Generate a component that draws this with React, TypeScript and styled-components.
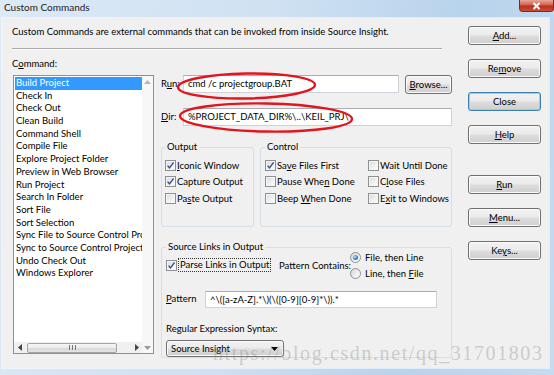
import React from "react";
import styled, { createGlobalStyle } from "styled-components";

const GlobalStyle = createGlobalStyle`
  html, body {
    margin: 0;
    padding: 0;
    background: #aecbe8;
  }
  body {
    font-family: Lato, "Liberation Sans", Arial, sans-serif;
    font-size: 9.5px;
    color: #000;
  }
  * {
    box-sizing: border-box;
  }
`;

const Window = styled.div`
  position: relative;
  width: 554px;
  height: 375px;
  display: flex;
  flex-direction: column;
  overflow: hidden;
  background: linear-gradient(100deg, #dce9f6 0%, #cfe1f2 45%, #b8d3ec 75%, #c4dbf0 100%);
`;

const TitleBar = styled.div`
  height: 18px;
  flex: none;
  display: flex;
  justify-content: space-between;
  align-items: flex-start;
`;

const Title = styled.span`
  padding: 1px 0 0 4px;
  font-size: 10px;
  line-height: 12px;
  color: #1b1b1b;
`;

const CloseButton = styled.div`
  width: 35px;
  height: 12px;
  display: flex;
  align-items: center;
  justify-content: center;
  border: 1px solid #7a2a20;
  border-top: none;
  border-radius: 0 0 4px 4px;
  background: linear-gradient(180deg, #e9a799 0%, #d1604a 45%, #bb2f1b 55%, #c9503a 100%);
`;

const Client = styled.div`
  flex: 1;
  margin: 0 5px 7px 2px;
  padding: 8px 0 0 10px;
  display: flex;
  background: #f0f0f0;
  box-shadow: 0 0 0 1px rgba(255, 255, 255, 0.55);
`;

const MainColumn = styled.div`
  width: 440px;
  display: flex;
  flex-direction: column;
`;

const Description = styled.div`
  height: 12px;
  line-height: 12px;
  white-space: nowrap;
`;

const Separator = styled.div`
  width: 430px;
  margin-top: 10px;
  border-top: 1px solid #a9a9a9;
  border-bottom: 1px solid #fcfcfc;
`;

const Body = styled.div`
  margin-top: 8px;
  display: flex;
  gap: 7px;
`;

const LeftColumn = styled.div`
  width: 142px;
  display: flex;
  flex-direction: column;
`;

const FieldLabel = styled.div`
  height: 12px;
  line-height: 12px;
  margin-bottom: 5px;
`;

const ListBox = styled.div`
  margin-left: 1px;
  width: 141px;
  height: 279px;
  border: 1px solid #8e9095;
  background: #fff;
  display: grid;
  grid-template-columns: 1fr 11px;
  grid-template-rows: 1fr 11px;
`;

const ListItems = styled.div`
  padding: 1px 0 0 1px;
  overflow: hidden;
`;

const ListItem = styled.div<{ $selected?: boolean }>`
  height: 12.7px;
  line-height: 12.7px;
  padding-left: 1px;
  white-space: nowrap;
  overflow: hidden;
  background: ${(p) => (p.$selected ? "#3399ff" : "transparent")};
  color: ${(p) => (p.$selected ? "#fff" : "#000")};
`;

const VScroll = styled.div`
  grid-row: 1 / 3;
  grid-column: 2;
  background: #f7f7f7;
  display: flex;
  flex-direction: column;
  justify-content: space-between;
  align-items: center;
  padding: 4px 0 3px;
`;

const HScroll = styled.div`
  grid-row: 2;
  grid-column: 1;
  background: #f0f0f0;
  display: flex;
  align-items: center;
`;

const ArrowCell = styled.div`
  width: 11px;
  height: 11px;
  flex: none;
  display: flex;
  align-items: center;
  justify-content: center;
`;

const Thumb = styled.div`
  width: 90px;
  height: 10px;
  margin: 0 auto 0 2px;
  border: 1px solid #a4a4a4;
  border-radius: 2px;
  background: linear-gradient(180deg, #f7f7f7 0%, #e9e9e9 50%, #d9d9d9 51%, #e3e3e3 100%);
  display: flex;
  align-items: center;
  justify-content: center;
`;

const RightColumn = styled.div`
  width: 291px;
  padding-top: 17px;
  display: flex;
  flex-direction: column;
`;

const FormRow = styled.div<{ $top?: number; $height: number }>`
  display: flex;
  align-items: flex-start;
  margin-top: ${(p) => p.$top ?? 0}px;
  height: ${(p) => p.$height}px;
`;

const RowLabel = styled.span<{ $width: number; $height: number }>`
  width: ${(p) => p.$width}px;
  flex: none;
  line-height: ${(p) => p.$height}px;
  white-space: nowrap;
`;

const TextInput = styled.div<{ $width?: number; $height: number }>`
  ${(p) => (p.$width ? `width: ${p.$width}px; flex: none;` : "flex: 1;")}
  height: ${(p) => p.$height}px;
  line-height: ${(p) => p.$height - 2}px;
  padding-left: 4px;
  border: 1px solid #cfd2d8;
  border-top-color: #abadb3;
  background: #fff;
  white-space: nowrap;
  overflow: hidden;
`;

const PushButton = styled.div<{ $width?: number; $default?: boolean; $left?: number; $top?: number }>`
  width: ${(p) => p.$width ?? 73}px;
  height: 19px;
  flex: none;
  margin-left: ${(p) => p.$left ?? 0}px;
  margin-top: ${(p) => p.$top ?? 0}px;
  display: flex;
  align-items: center;
  justify-content: center;
  border: 1px solid ${(p) => (p.$default ? "#3c7fb1" : "#707070")};
  border-radius: 3px;
  background: linear-gradient(180deg, #f2f2f2 0%, #ebebeb 48%, #dddddd 52%, #cfcfcf 100%);
  box-shadow: inset 0 0 0 1px ${(p) => (p.$default ? "#8fd2f6" : "#fbfbfb")};
  white-space: nowrap;
`;

const GroupsRow = styled.div`
  margin-top: 15px;
  display: flex;
  gap: 6px;
  height: 86px;
`;

const Group = styled.fieldset<{ $width: number; $pad: number }>`
  width: ${(p) => p.$width}px;
  margin: 0;
  padding: 0 ${(p) => p.$pad}px;
  min-width: 0;
  border: 1px solid #d5dfe5;
  border-radius: 3px;
`;

const Legend = styled.legend`
  padding: 0 2px;
  margin: 0;
  line-height: 12px;
  font-size: 9.5px;
`;

const CheckGrid = styled.div<{ $columns: string }>`
  padding-top: 4px;
  display: grid;
  grid-template-columns: ${(p) => p.$columns};
  grid-auto-rows: 16.5px;
`;

const CheckItem = styled.label`
  display: flex;
  align-items: center;
  gap: 1px;
  white-space: nowrap;
`;

const Box = styled.span`
  width: 11px;
  height: 11px;
  flex: none;
  display: flex;
  align-items: center;
  justify-content: center;
  border: 1px solid #8e8f8f;
  background: linear-gradient(135deg, #d8d8d8 0%, #f2f2f2 60%, #fbfbfb 100%);
  box-shadow: inset 0 0 0 1px #f6f6f6;
`;

const FocusText = styled.span`
  border: 1px dotted #333;
  padding: 0 1px;
  line-height: 12px;
`;

const SourceGroup = styled.fieldset`
  margin: 14px 0 0;
  padding: 0 4px;
  min-width: 0;
  border: 1px solid #d5dfe5;
  border-radius: 3px;
`;

const LinksRow = styled.div`
  margin-top: -4px;
  height: 32px;
  display: grid;
  grid-template-columns: 113px 71px 1fr;
  align-items: center;
  white-space: nowrap;
`;

const RadioList = styled.div`
  display: flex;
  flex-direction: column;
`;

const RadioItem = styled.label`
  height: 16px;
  display: flex;
  align-items: center;
  gap: 4px;
  white-space: nowrap;
`;

const RadioCircle = styled.span<{ $checked?: boolean }>`
  width: 11px;
  height: 11px;
  flex: none;
  border-radius: 50%;
  border: 1px solid #8e8f8f;
  background: linear-gradient(135deg, #d6d6d6 0%, #f4f4f4 70%, #fdfdfd 100%);
  display: flex;
  align-items: center;
  justify-content: center;
  &::after {
    content: "";
    display: ${(p) => (p.$checked ? "block" : "none")};
    width: 5px;
    height: 5px;
    border-radius: 50%;
    background: radial-gradient(circle at 35% 35%, #bfe3ff 0%, #4a90d9 45%, #1c4f94 100%);
  }
`;

const SmallLabel = styled.div<{ $top: number }>`
  margin-top: ${(p) => p.$top}px;
  height: 12px;
  line-height: 12px;
`;

const ComboBox = styled.div`
  margin-top: 5px;
  width: 118px;
  height: 17px;
  padding: 0 5px 0 4px;
  display: flex;
  align-items: center;
  justify-content: space-between;
  border: 1px solid #707070;
  border-radius: 3px;
  background: linear-gradient(180deg, #f2f2f2 0%, #ebebeb 48%, #dddddd 52%, #cfcfcf 100%);
  box-shadow: inset 0 0 0 1px #fbfbfb;
`;

const ButtonColumn = styled.div`
  margin-left: 16px;
  display: flex;
  flex-direction: column;
  gap: 14px;
`;

const Annotations = styled.svg`
  position: absolute;
  left: 0;
  top: 0;
  pointer-events: none;
`;

const Watermark = styled.div`
  position: absolute;
  left: 213px;
  top: 341px;
  font-family: "Liberation Serif", "Times New Roman", serif;
  font-size: 20px;
  line-height: 24px;
  letter-spacing: 1.6px;
  white-space: nowrap;
  color: rgba(150, 150, 150, 0.42);
  pointer-events: none;
`;

const Check = () => (
  <svg width="9" height="9" viewBox="0 0 9 9">
    <path d="M1.6 4.6 L3.5 6.9 L7.6 1.4" fill="none" stroke="#2f4f8f" strokeWidth="1.4" />
  </svg>
);

const CheckBox = ({ checked, children }: { checked?: boolean; children: React.ReactNode }) => (
  <CheckItem>
    <Box>{checked && <Check />}</Box>
    <span>{children}</span>
  </CheckItem>
);

const Tri = ({ dir, color = "#444" }: { dir: "up" | "down" | "left" | "right"; color?: string }) => {
  const pts = {
    up: "0,4 3.5,0 7,4",
    down: "0,0 3.5,4 7,0",
    left: "4,0 0,3.5 4,7",
    right: "0,0 4,3.5 0,7",
  }[dir];
  const horizontal = dir === "left" || dir === "right";
  return (
    <svg width={horizontal ? 4 : 7} height={horizontal ? 7 : 4} viewBox={horizontal ? "0 0 4 7" : "0 0 7 4"}>
      <polygon points={pts} fill={color} />
    </svg>
  );
};

const commands = [
  "Build Project",
  "Check In",
  "Check Out",
  "Clean Build",
  "Command Shell",
  "Compile File",
  "Explore Project Folder",
  "Preview in Web Browser",
  "Run Project",
  "Search In Folder",
  "Sort File",
  "Sort Selection",
  "Sync File to Source Control Project",
  "Sync to Source Control Project",
  "Undo Check Out",
  "Windows Explorer",
];

const App = () => {
  return (
    <Window>
      <GlobalStyle />
      <TitleBar>
        <Title>Custom Commands</Title>
        <CloseButton>
          <svg width="9" height="8" viewBox="0 0 9 8">
            <path d="M1.5 1 L7.5 7 M7.5 1 L1.5 7" stroke="#fff" strokeWidth="2" />
          </svg>
        </CloseButton>
      </TitleBar>
      <Client>
        <MainColumn>
          <Description>
            Custom Commands are external commands that can be invoked from inside Source Insight.
          </Description>
          <Separator />
          <Body>
            <LeftColumn>
              <FieldLabel>
                C<u>o</u>mmand:
              </FieldLabel>
              <ListBox>
                <ListItems>
                  {commands.map((c, i) => (
                    <ListItem key={c} $selected={i === 0}>
                      {c}
                    </ListItem>
                  ))}
                </ListItems>
                <VScroll>
                  <Tri dir="up" color="#b5b5b5" />
                  <Tri dir="down" color="#9a9a9a" />
                </VScroll>
                <HScroll>
                  <ArrowCell>
                    <Tri dir="left" />
                  </ArrowCell>
                  <Thumb>
                    <svg width="7" height="5" viewBox="0 0 7 5">
                      <path d="M0.5 0 V5 M3.5 0 V5 M6.5 0 V5" stroke="#777" strokeWidth="1" />
                    </svg>
                  </Thumb>
                  <ArrowCell>
                    <Tri dir="right" />
                  </ArrowCell>
                </HScroll>
              </ListBox>
            </LeftColumn>

            <RightColumn>
              <FormRow $height={19}>
                <RowLabel $width={22} $height={18}>
                  R<u>u</u>n:
                </RowLabel>
                <TextInput $width={216} $height={18}>
                  cmd /c projectgroup.BAT
                </TextInput>
                <PushButton $width={47} $left={6}>
                  <span>
                    <u>B</u>rowse...
                  </span>
                </PushButton>
              </FormRow>
              <FormRow $top={14} $height={18}>
                <RowLabel $width={22} $height={18}>
                  <u>D</u>ir:
                </RowLabel>
                <TextInput $height={18}>%PROJECT_DATA_DIR%\..\KEIL_PRJ\</TextInput>
              </FormRow>

              <GroupsRow>
                <Group $width={93} $pad={3}>
                  <Legend>Output</Legend>
                  <CheckGrid $columns="1fr">
                    <CheckBox checked>
                      <u>I</u>conic Window
                    </CheckBox>
                    <CheckBox checked>Capture Output</CheckBox>
                    <CheckBox>
                      Pa<u>s</u>te Output
                    </CheckBox>
                  </CheckGrid>
                </Group>
                <Group $width={192} $pad={4}>
                  <Legend>Control</Legend>
                  <CheckGrid $columns="103px 1fr">
                    <CheckBox checked>
                      Sa<u>v</u>e Files First
                    </CheckBox>
                    <CheckBox>Wait Until Done</CheckBox>
                    <CheckBox>
                      Pause Whe<u>n</u> Done
                    </CheckBox>
                    <CheckBox>
                      C<u>l</u>ose Files
                    </CheckBox>
                    <CheckBox>
                      Beep <u>W</u>hen Done
                    </CheckBox>
                    <CheckBox>
                      E<u>x</u>it to Windows
                    </CheckBox>
                  </CheckGrid>
                </Group>
              </GroupsRow>

              <SourceGroup>
                <Legend>Source Links in Output</Legend>
                <LinksRow>
                  <CheckItem>
                    <Box>
                      <Check />
                    </Box>
                    <FocusText>Parse Links in Output</FocusText>
                  </CheckItem>
                  <span>Pattern Contains:</span>
                  <RadioList>
                    <RadioItem>
                      <RadioCircle $checked />
                      <span>File, then Line</span>
                    </RadioItem>
                    <RadioItem>
                      <RadioCircle />
                      <span>
                        Line, then <u>F</u>ile
                      </span>
                    </RadioItem>
                  </RadioList>
                </LinksRow>
                <FormRow $top={10} $height={17}>
                  <RowLabel $width={39} $height={15}>
                    <u>P</u>attern
                  </RowLabel>
                  <TextInput $width={232} $height={17}>
                    ^\([a-zA-Z].*\)(\([0-9][0-9]*\)).*
                  </TextInput>
                </FormRow>
                <SmallLabel $top={15}>Regular Expression Syntax:</SmallLabel>
                <ComboBox>
                  <span>Source Insight</span>
                  <Tri dir="down" color="#000" />
                </ComboBox>
              </SourceGroup>
            </RightColumn>
          </Body>
        </MainColumn>

        <ButtonColumn>
          <PushButton>
            <span>
              <u>A</u>dd...
            </span>
          </PushButton>
          <PushButton>
            <span>
              Re<u>m</u>ove
            </span>
          </PushButton>
          <PushButton $default>Close</PushButton>
          <PushButton>
            <span>
              <u>H</u>elp
            </span>
          </PushButton>
          <PushButton $top={17}>
            <span>
              <u>R</u>un
            </span>
          </PushButton>
          <PushButton>
            <span>
              <u>M</u>enu...
            </span>
          </PushButton>
          <PushButton>
            <span>
              Ke<u>y</u>s...
            </span>
          </PushButton>
        </ButtonColumn>
      </Client>

      <Annotations width="554" height="375" viewBox="0 0 554 375">
        <ellipse cx="246.5" cy="86" rx="68.5" ry="12.5" fill="none" stroke="#e3141b" strokeWidth="2.4" transform="rotate(-1 246.5 86)" />
        <ellipse cx="266" cy="117.5" rx="86" ry="14" fill="none" stroke="#e3141b" strokeWidth="2.4" transform="rotate(1 266 117.5)" />
      </Annotations>

      <Watermark>https://blog.csdn.net/qq_31701803</Watermark>
    </Window>
  );
};

export default App;
